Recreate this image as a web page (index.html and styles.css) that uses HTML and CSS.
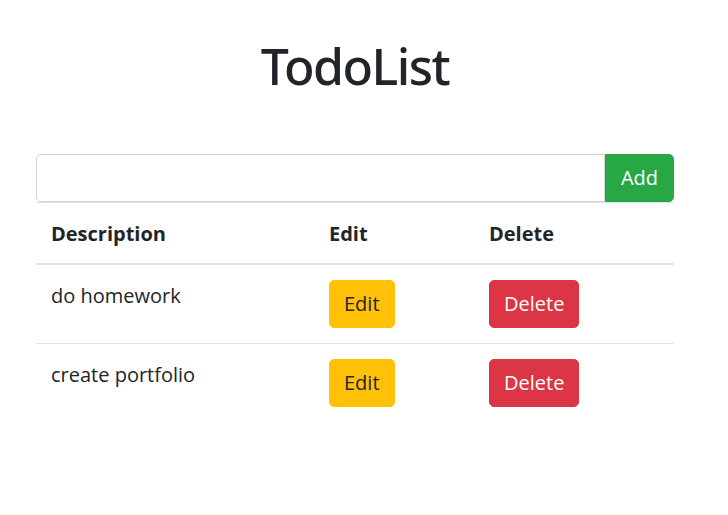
FILE: index.html
```html
<!DOCTYPE html>
<html lang="en">
<head>
<meta charset="utf-8">
<title>TodoList</title>
<link rel="stylesheet" href="styles.css">
</head>
<body>
<div class="container">
  <h1 class="title">TodoList</h1>
  <div class="input-group">
    <input class="form-control" type="text">
    <button class="btn btn-success">Add</button>
  </div>
  <table class="table">
    <thead>
      <tr>
        <th class="col-desc">Description</th>
        <th class="col-edit">Edit</th>
        <th class="col-del">Delete</th>
      </tr>
    </thead>
    <tbody>
      <tr>
        <td>do homework</td>
        <td><button class="btn btn-warning">Edit</button></td>
        <td><button class="btn btn-danger">Delete</button></td>
      </tr>
      <tr>
        <td>create portfolio</td>
        <td><button class="btn btn-warning">Edit</button></td>
        <td><button class="btn btn-danger">Delete</button></td>
      </tr>
    </tbody>
  </table>
</div>
</body>
</html>
```
FILE: styles.css
```css
* { box-sizing: border-box; }
html, body { margin: 0; padding: 0; background: #fff; }
body {
  font-family: "Open Sans", "Noto Sans", sans-serif;
  font-size: 20px;
  line-height: 30px;
  color: #212529;
}
.container {
  width: 638px;
  margin-left: 36px;
  padding-top: 36px;
}
.title {
  margin: 0 0 58px;
  font-family: "Noto Sans", "Open Sans", sans-serif;
  font-size: 50px;
  line-height: 60px;
  font-weight: 500;
  letter-spacing: -1.5px;
  text-align: center;
}
.input-group {
  display: flex;
  height: 48px;
}
.form-control {
  flex: 1;
  min-width: 0;
  height: 100%;
  margin: 0;
  border: 1px solid #ced4da;
  border-radius: 5px 0 0 5px;
  font: inherit;
  padding: 8px 15px;
  background: #fff;
}
.btn {
  font: inherit;
  font-size: 20px;
  line-height: 30px;
  padding: 8px 15px;
  border: 1px solid transparent;
  border-radius: 5px;
  cursor: pointer;
  margin: 0;
}
.table .btn { padding: 8px 14px; }
.input-group .btn { border-radius: 0 5px 5px 0; }
.btn-success { background: #28a745; border-color: #28a745; color: #fff; }
.btn-warning { background: #ffc107; border-color: #ffc107; color: #212529; }
.btn-danger { background: #dc3545; border-color: #dc3545; color: #fff; }
.table {
  width: 100%;
  border-collapse: collapse;
  margin-bottom: 20px;
}
.table th, .table td {
  padding: 15px;
  vertical-align: top;
  border-top: 1px solid #dee2e6;
  text-align: left;
}
.table td { padding-top: 16px; }
.table td:nth-child(n+2) { padding-top: 15px; padding-left: 16px; }
.table thead th {
  vertical-align: bottom;
  padding-top: 16px;
  padding-bottom: 14px;
  border-bottom: 2px solid #dee2e6;
  font-weight: 700;
}
.table thead th:nth-child(n+2) { padding-left: 16px; }
.col-desc { width: 277px; }
.col-edit { width: 160px; }
.col-del { width: 201px; }
```
